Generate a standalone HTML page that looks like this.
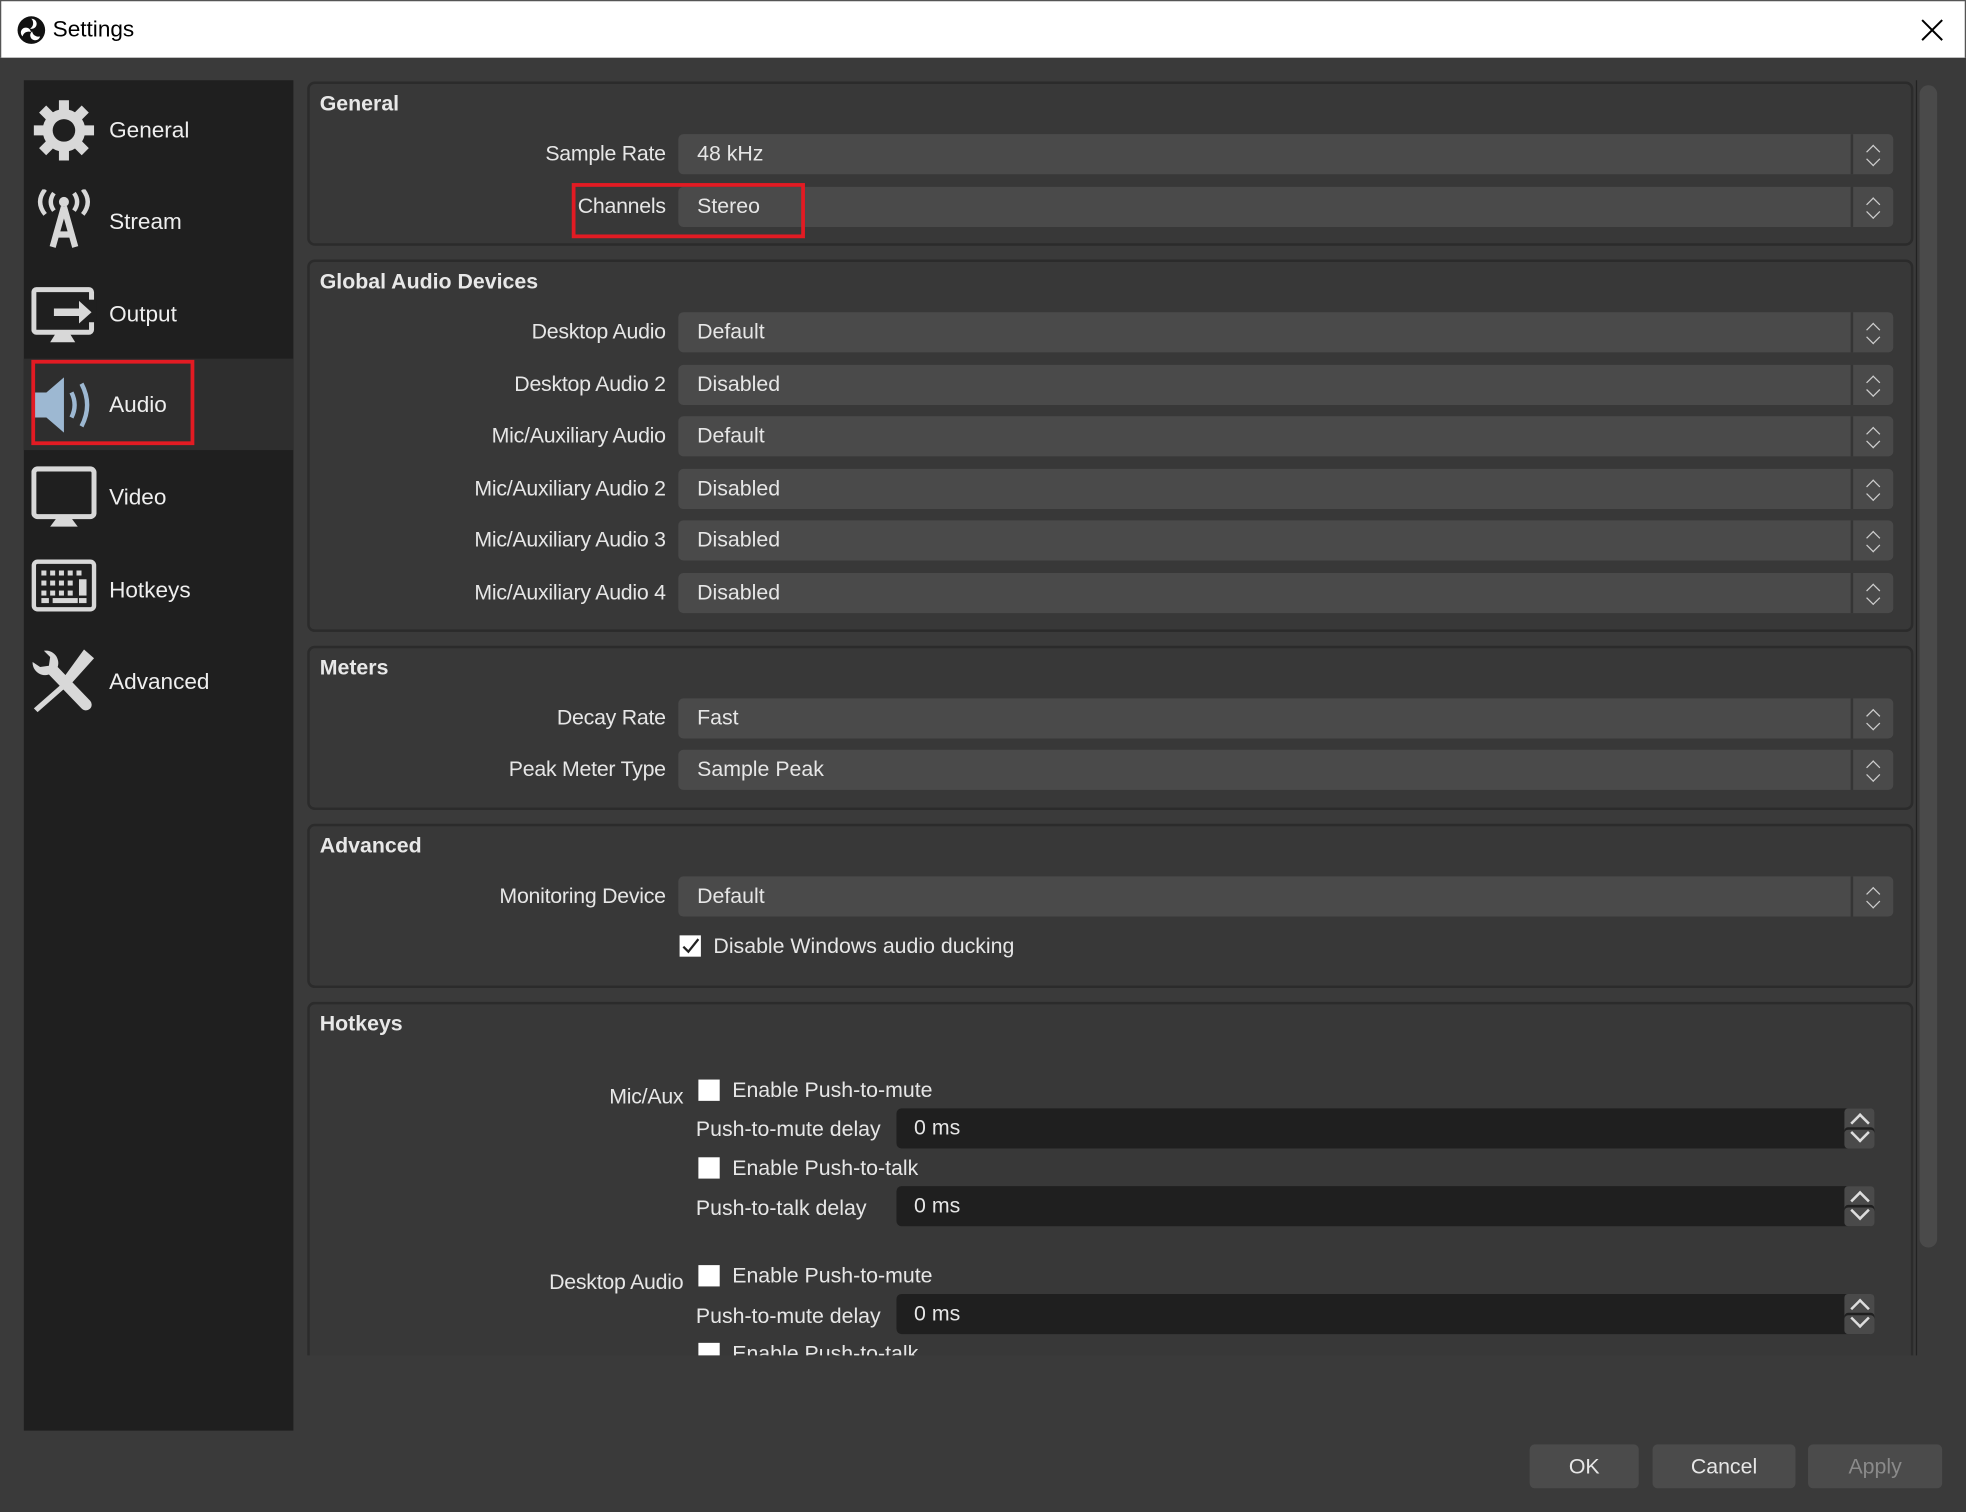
<!DOCTYPE html>
<html><head><meta charset="utf-8"><style>
*{margin:0;padding:0;box-sizing:border-box}
html,body{width:1966px;height:1512px;overflow:hidden;background:#3a3a3a}
#w{position:absolute;left:0;top:0;width:1568px;height:1206px;transform:scale(1.25383);transform-origin:0 0;background:#3a3a3a;font-family:"Liberation Sans",sans-serif;color:#e6e6e6;font-size:17px}
.a{position:absolute}
#title{left:0;top:0;width:1568px;height:46px;background:#fff;color:#000;border:1px solid #555;border-bottom:none}
#side{left:19px;top:64px;width:215px;height:1077px;background:#1f1f1f}
.nav{position:absolute;left:0;width:215px;height:73px}
.nav span{position:absolute;left:68px;top:50%;transform:translateY(-50%);font-size:18px;color:#eee}
.nav svg{position:absolute;left:6px;top:11px}
.grp{position:absolute;left:245px;width:1281px;border:2px solid #2b2b2b;border-radius:6px;background:#383838}
.gt{position:absolute;left:8px;top:6px;font-weight:bold;font-size:17px;color:#e8e8e8}
.lb{position:absolute;right:1037px;height:32px;line-height:32px;text-align:right;white-space:nowrap;letter-spacing:-0.2px}
.cb{position:absolute;left:541px;width:969px;height:32px;background:#4a4a4a;border-radius:4px;line-height:32px;padding-left:15px}
.cb:after{content:"";position:absolute;right:32px;top:0;width:2px;height:32px;background:#353535}
.cb i{position:absolute;right:10px;top:6px;width:12px;height:20px}
.sp{position:absolute;left:715px;width:780px;height:32px;background:#1f1f1f;border-radius:4px;line-height:32px;padding-left:14px}
.sb{position:absolute;right:0;top:0;width:24px;height:32px;background:#4a4a4a;border-radius:3px}
.chk{position:absolute;left:557px;width:17px;height:17px;background:#fff}
.ct{position:absolute;left:584px}
.btn{position:absolute;top:1152px;height:35px;background:#4b4b4b;border-radius:4px;text-align:center;line-height:35px;font-size:17px}
</style></head><body><div id="w">
<div id="title" class="a">
<svg class="a" style="left:12px;top:11px" width="24" height="24" viewBox="0 0 24 24"><circle cx="12" cy="12" r="11" fill="#111"/><path d="M12 3a4 4 0 1 1-1 7.8A5 5 0 0 0 12 3z" fill="#fff"/><path d="M5 17a4 4 0 1 1 6.6-3.5A5 5 0 0 0 5 17z" fill="#fff"/><path d="M19 17a4 4 0 1 1-6.4-4A5 5 0 0 0 19 17z" fill="#fff"/></svg>
<span class="a" style="left:41px;top:12px;font-size:18px">Settings</span>
<svg class="a" style="left:1530px;top:13px" width="20" height="20" viewBox="0 0 20 20"><path d="M2 2L18 18M18 2L2 18" stroke="#000" stroke-width="1.6"/></svg>
</div>
<div id="side" class="a">
<div class="nav" style="top:3px"><svg width="52" height="52" viewBox="0 0 52 52"><g fill="#d8d8d8"><circle cx="26" cy="26" r="17"/><g stroke="#d8d8d8" stroke-width="8"><path d="M26 2V50M2 26H50M9 9L43 43M43 9L9 43"/></g></g><circle cx="26" cy="26" r="9" fill="#1f1f1f"/></svg><span>General</span></div>
<div class="nav" style="top:76px"><svg width="52" height="52" viewBox="0 0 52 52" fill="none" stroke="#d8d8d8" stroke-width="3.5"><circle cx="26" cy="10" r="4" fill="#d8d8d8" stroke="none"/><path d="M18 3Q13 10 18 17M34 3Q39 10 34 17M11 0Q3 10 11 20M41 0Q49 10 41 20"/><path d="M26 14L17 46M26 14L35 46M20 36H32" stroke-width="5"/></svg><span>Stream</span></div>
<div class="nav" style="top:150px"><svg width="52" height="52" viewBox="0 0 52 52"><rect x="2" y="6" width="46" height="34" rx="2" fill="none" stroke="#d8d8d8" stroke-width="4"/><path d="M20 40h10l5 8H15z" fill="#d8d8d8"/><rect x="38" y="14" width="14" height="18" fill="#1f1f1f"/><path d="M18 21h20v-6l10 9-10 9v-6H18z" fill="#d8d8d8"/></svg><span>Output</span></div>
<div class="nav" style="top:222px;background:#2e2e2e"><svg width="52" height="52" viewBox="0 0 52 52"><path d="M2 16h10l14-12v44L12 36H2z" fill="#9db8d2"/><path d="M32 16q5 10 0 20M40 9q9 17 0 34" stroke="#9db8d2" stroke-width="3.5" fill="none"/></svg><span>Audio</span></div>
<div style="position:absolute;left:6px;top:223px;width:130px;height:68px;border:3px solid #e21b23"></div>
<div class="nav" style="top:296px"><svg width="52" height="52" viewBox="0 0 52 52"><rect x="2" y="3" width="48" height="38" rx="3" fill="none" stroke="#d8d8d8" stroke-width="4"/><path d="M21 41h10l6 8H15z" fill="#d8d8d8"/></svg><span>Video</span></div>
<div class="nav" style="top:370px"><svg width="52" height="52" viewBox="0 0 52 52"><rect x="2" y="3" width="48" height="38" rx="3" fill="none" stroke="#d8d8d8" stroke-width="3.5"/><g fill="#d8d8d8"><rect x="8" y="10" width="4" height="4"/><rect x="15" y="10" width="4" height="4"/><rect x="22" y="10" width="4" height="4"/><rect x="29" y="10" width="4" height="4"/><rect x="36" y="10" width="4" height="4"/><rect x="8" y="18" width="4" height="4"/><rect x="15" y="18" width="4" height="4"/><rect x="22" y="18" width="4" height="4"/><rect x="29" y="18" width="4" height="4"/><rect x="38" y="17" width="6" height="13"/><rect x="8" y="26" width="4" height="4"/><rect x="15" y="26" width="4" height="4"/><rect x="22" y="26" width="4" height="4"/><rect x="29" y="26" width="4" height="4"/><rect x="8" y="32" width="6" height="4"/><rect x="17" y="32" width="20" height="4"/><rect x="38" y="32" width="6" height="4"/></g></svg><span>Hotkeys</span></div>
<div class="nav" style="top:443px"><svg width="52" height="52" viewBox="0 0 52 52"><g fill="#d8d8d8"><path d="M42 0L50 7L32 27L26 22z"/><path d="M27 25L30 28L5 50L2 47z"/><path d="M1 10a10 10 0 0 0 13 10L40 47a4.5 4.5 0 0 0 7-6L21 14A10 10 0 0 0 10 1l5 5-1 7-7 1z"/></g></svg><span>Advanced</span></div>
</div>

<div class="grp" style="top:65px;height:131px"><div class="gt">General</div></div>
<div class="lb" style="top:107px">Sample Rate</div><div class="cb" style="top:107px">48 kHz<i></i></div>
<div class="lb" style="top:149px">Channels</div><div class="cb" style="top:149px">Stereo<i></i></div>
<div class="a" style="left:456px;top:146px;width:186px;height:44px;border:3px solid #e21b23"></div>

<div class="grp" style="top:207px;height:297px"><div class="gt">Global Audio Devices</div></div>
<div class="lb" style="top:249px">Desktop Audio</div><div class="cb" style="top:249px">Default<i></i></div>
<div class="lb" style="top:291px">Desktop Audio 2</div><div class="cb" style="top:291px">Disabled<i></i></div>
<div class="lb" style="top:332px">Mic/Auxiliary Audio</div><div class="cb" style="top:332px">Default<i></i></div>
<div class="lb" style="top:374px">Mic/Auxiliary Audio 2</div><div class="cb" style="top:374px">Disabled<i></i></div>
<div class="lb" style="top:415px">Mic/Auxiliary Audio 3</div><div class="cb" style="top:415px">Disabled<i></i></div>
<div class="lb" style="top:457px">Mic/Auxiliary Audio 4</div><div class="cb" style="top:457px">Disabled<i></i></div>

<div class="grp" style="top:515px;height:131px"><div class="gt">Meters</div></div>
<div class="lb" style="top:557px">Decay Rate</div><div class="cb" style="top:557px">Fast<i></i></div>
<div class="lb" style="top:598px">Peak Meter Type</div><div class="cb" style="top:598px">Sample Peak<i></i></div>

<div class="grp" style="top:657px;height:131px"><div class="gt">Advanced</div></div>
<div class="lb" style="top:699px">Monitoring Device</div><div class="cb" style="top:699px">Default<i></i></div>
<div class="a" style="left:542px;top:746px;width:17px;height:17px;background:#fff"><svg width="17" height="17" viewBox="0 0 17 17"><path d="M3 9l4 4 8-10" stroke="#222" stroke-width="1.8" fill="none"/></svg></div>
<div class="a" style="left:569px;top:745px">Disable Windows audio ducking</div>

<div class="a" style="left:245px;top:799px;width:1281px;height:282px;overflow:hidden">
<div class="grp" style="left:0;top:0;height:400px"><div class="gt">Hotkeys</div></div>
</div>
<div class="a" style="left:0;top:0;width:1568px;height:1081px;overflow:hidden">
<div class="lb" style="top:859px;right:1023px">Mic/Aux</div>
<div class="chk" style="top:861px"></div><div class="a ct" style="top:860px">Enable Push-to-mute</div>
<div class="a" style="left:555px;top:891px">Push-to-mute delay</div>
<div class="sp" style="top:884px">0 ms<div class="sb"></div></div>
<div class="chk" style="top:923px"></div><div class="a ct" style="top:922px">Enable Push-to-talk</div>
<div class="a" style="left:555px;top:954px">Push-to-talk delay</div>
<div class="sp" style="top:946px">0 ms<div class="sb"></div></div>
<div class="lb" style="top:1007px;right:1023px">Desktop Audio</div>
<div class="chk" style="top:1009px"></div><div class="a ct" style="top:1008px">Enable Push-to-mute</div>
<div class="a" style="left:555px;top:1040px">Push-to-mute delay</div>
<div class="sp" style="top:1032px">0 ms<div class="sb"></div></div>
<div class="chk" style="top:1071px"></div><div class="a ct" style="top:1070px">Enable Push-to-talk</div>
</div>
<div class="a" style="left:1531px;top:68px;width:14px;height:927px;background:#4a4a4a;border-radius:7px"></div>
<div class="a" style="left:1528px;top:64px;width:1px;height:1017px;background:#222"></div>

<div class="btn" style="left:1220px;width:87px">OK</div>
<div class="btn" style="left:1318px;width:114px">Cancel</div>
<div class="btn" style="left:1442px;width:107px;color:#8a8a8a">Apply</div>

<style>
.cb i:before,.cb i:after{content:"";position:absolute;left:2px;width:7px;height:7px;border-left:1.6px solid #ccc;border-top:1.6px solid #ccc}
.cb i:before{top:4px;transform:rotate(45deg)}
.cb i:after{top:10px;transform:rotate(225deg)}
.sb:before,.sb:after{content:"";position:absolute;left:7px;width:9px;height:9px;border-left:2px solid #ddd;border-top:2px solid #ddd}
.sb:before{top:6px;transform:rotate(45deg)}
.sb:after{top:14px;transform:rotate(225deg)}
.sp .sb{box-shadow:inset 0 15px 0 #4a4a4a,inset 0 17px 0 #1f1f1f}
</style>
</div></body></html>
